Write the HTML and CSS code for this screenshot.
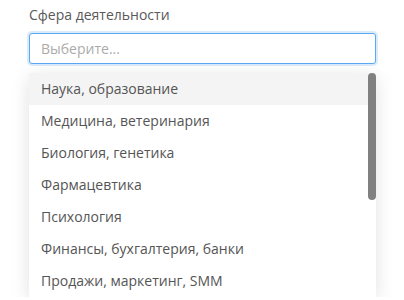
FILE: index.html
```html
<!DOCTYPE html>
<html lang="ru">
<head>
<meta charset="UTF-8">
<title>Сфера деятельности</title>
<link rel="stylesheet" href="styles.css">
</head>
<body>
<div class="field">
  <label class="fieldLabel" for="sphere">Сфера деятельности</label>
  <input type="text" id="sphere" class="selectInput" placeholder="Выберите...">
  <div class="dropdown">
    <ul class="optionList">
      <li class="option active">Наука, образование</li>
      <li class="option">Медицина, ветеринария</li>
      <li class="option">Биология, генетика</li>
      <li class="option">Фармацевтика</li>
      <li class="option">Психология</li>
      <li class="option">Финансы, бухгалтерия, банки</li>
      <li class="option">Продажи, маркетинг, SMM</li>
    </ul>
    <div class="scrollThumb"></div>
  </div>
</div>
</body>
</html>
```

FILE: styles.css
```css
body {
  margin: 0;
  font-family: "Open Sans", Arial, sans-serif;
  background: #ffffff;
  overflow: hidden;
}

.field {
  width: 347px;
  padding: 4px 0 0 29px;
}

.fieldLabel {
  display: block;
  font-size: 14px;
  line-height: 22px;
  color: #5a5a5a;
  margin-bottom: 7px;
}

.selectInput {
  display: block;
  box-sizing: border-box;
  width: 347px;
  height: 31px;
  margin: 0;
  padding: 0 11px;
  border: 1px solid #5aa8f2;
  border-radius: 3px;
  box-shadow: 0 0 0 2px #dcebfb;
  font-family: "Open Sans", Arial, sans-serif;
  font-size: 14px;
  color: #555555;
  outline: none;
}

.selectInput::placeholder {
  color: #ababab;
}

.dropdown {
  position: relative;
  margin-top: 9px;
  background: #ffffff;
  box-shadow: 0 4px 18px rgba(0, 0, 0, 0.12);
}

.optionList {
  list-style: none;
  margin: 0;
  padding: 0;
}

.option {
  height: 32px;
  line-height: 32px;
  padding: 0 12px;
  font-size: 14px;
  color: #555555;
}

.option.active {
  background: #f4f4f4;
}

.scrollThumb {
  position: absolute;
  top: 0;
  right: 0;
  width: 8px;
  height: 127px;
  border-radius: 4px;
  background: #808080;
}
```
